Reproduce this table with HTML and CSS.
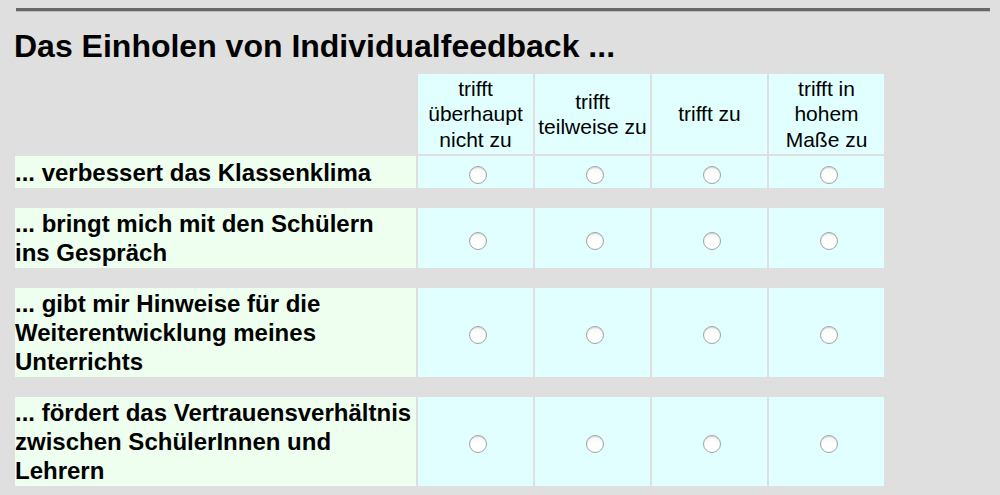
FILE: index.html
```html
<!DOCTYPE html>
<html lang="de">
<head>
<meta charset="utf-8">
<title>Individualfeedback</title>
<link rel="stylesheet" href="styles.css">
</head>
<body>
<div class="page">
  <hr class="rule">
  <h1 class="title">Das Einholen von Individualfeedback ...</h1>
  <table class="survey">
    <colgroup>
      <col class="col-label">
      <col class="col-opt"><col class="col-opt"><col class="col-opt"><col class="col-opt">
    </colgroup>
    <tr class="head">
      <td class="blank"></td>
      <th>trifft<br>überhaupt<br>nicht zu</th>
      <th>trifft<br>teilweise zu</th>
      <th>trifft zu</th>
      <th>trifft in<br>hohem<br>Maße zu</th>
    </tr>
    <tr class="item r1">
      <td class="label">... verbessert das Klassenklima</td>
      <td class="opt"><input type="radio" name="q1"></td>
      <td class="opt"><input type="radio" name="q1"></td>
      <td class="opt"><input type="radio" name="q1"></td>
      <td class="opt"><input type="radio" name="q1"></td>
    </tr>
    <tr class="gap"><td colspan="5"></td></tr>
    <tr class="item r2">
      <td class="label">... bringt mich mit den Schülern<br>ins Gespräch</td>
      <td class="opt"><input type="radio" name="q2"></td>
      <td class="opt"><input type="radio" name="q2"></td>
      <td class="opt"><input type="radio" name="q2"></td>
      <td class="opt"><input type="radio" name="q2"></td>
    </tr>
    <tr class="gap"><td colspan="5"></td></tr>
    <tr class="item r3">
      <td class="label">... gibt mir Hinweise für die<br>Weiterentwicklung meines<br>Unterrichts</td>
      <td class="opt"><input type="radio" name="q3"></td>
      <td class="opt"><input type="radio" name="q3"></td>
      <td class="opt"><input type="radio" name="q3"></td>
      <td class="opt"><input type="radio" name="q3"></td>
    </tr>
    <tr class="gap"><td colspan="5"></td></tr>
    <tr class="item r3">
      <td class="label">... fördert das Vertrauensverhältnis<br>zwischen SchülerInnen und<br>Lehrern</td>
      <td class="opt"><input type="radio" name="q4"></td>
      <td class="opt"><input type="radio" name="q4"></td>
      <td class="opt"><input type="radio" name="q4"></td>
      <td class="opt"><input type="radio" name="q4"></td>
    </tr>
  </table>
</div>
</body>
</html>
```

FILE: styles.css
```css
html, body {
  margin: 0;
  padding: 0;
  background: #dfdfdf;
}

body {
  font-family: "Liberation Sans", Arial, Helvetica, sans-serif;
  color: #000;
  overflow: hidden;
}

.page {
  padding: 8px 10px 0 13px;
  border-left: 2px solid #e5e5e5;
  margin-left: -2px;
}

.rule {
  margin: 0 0 0 3px;
  width: 974px;
  height: 3px;
  border: none;
  background: #676767;
  box-shadow: 0 1px 0 #bdbdbd;
}

.title {
  margin: 17px 0 0 1px;
  font-size: 32px;
  line-height: 37px;
  font-weight: bold;
}

.survey {
  margin-top: 7px;
  border-collapse: separate;
  border-spacing: 2px;
  table-layout: fixed;
  width: 871px;
}

.col-label { width: 401px; }
.col-opt { width: 115px; }

.head th {
  height: 80px;
  padding: 0 2px;
  background: #e1ffff;
  font-weight: normal;
  font-size: 21px;
  line-height: 25.5px;
  text-align: center;
  vertical-align: middle;
}

.head .blank {
  background: transparent;
  padding: 0;
}

.item td {
  padding: 0;
  vertical-align: middle;
}

.r1 td { height: 32px; }
.r2 td { height: 60px; }
.r3 td { height: 89px; }

.label {
  background: #efffef;
  font-weight: bold;
  font-size: 24px;
  line-height: 29px;
  white-space: nowrap;
}

.opt {
  background: #e1ffff;
  text-align: center;
}

.gap td {
  height: 16px;
  padding: 0;
  background: transparent;
}

.opt input[type="radio"] {
  -webkit-appearance: none;
  appearance: none;
  display: inline-block;
  vertical-align: middle;
  width: 18px;
  height: 18px;
  margin: 5px 0 0 5px;
  border-radius: 50%;
  border: 1px solid #a3a3a3;
  background: linear-gradient(#f4f4f4, #ffffff 45%);
  box-shadow: inset 0 1px 1px rgba(0,0,0,0.12);
  box-sizing: border-box;
}
```
